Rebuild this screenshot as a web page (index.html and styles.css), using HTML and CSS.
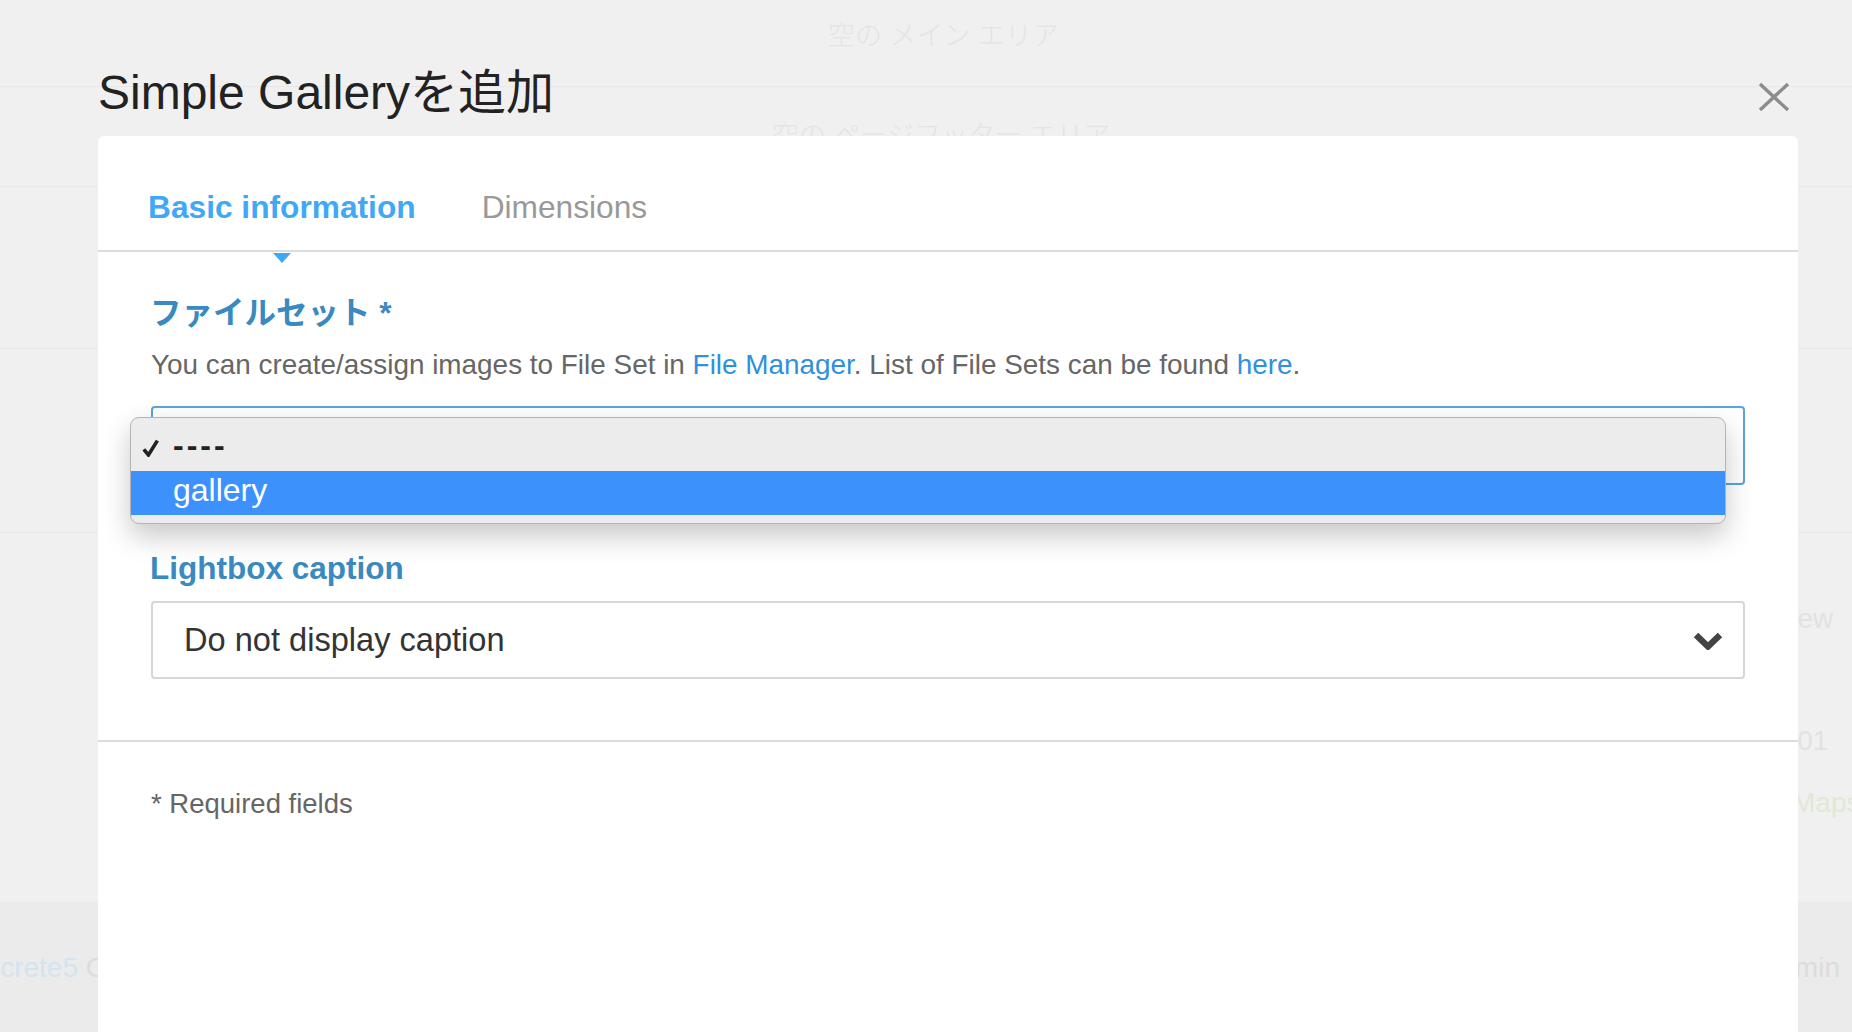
FILE: index.html
```html
<!DOCTYPE html>
<html lang="ja">

<head>
   <meta charset="UTF-8">
   <meta name="viewport" content="width=device-width, initial-scale=1.0">
   <title>Simple Galleryを追加</title>

   <link rel="stylesheet" href="styles.css">
</head>

<body>
   <div class="page">
      <div class="band band__main"><span class="ghost">空の メイン エリア</span></div>
      <div class="band band__footer"><span class="ghost">空の ページフッター エリア</span></div>
      <div class="band band__blank"></div>
      <div class="band band__blank2"></div>
      <div class="band band__list">
         <div class="side">
            <div class="side__item side__view">View</div>
            <div class="side__item side__date">2001</div>
            <div class="side__item side__maps">Maps</div>
         </div>
      </div>
      <div class="band band__bottom">
         <div class="bottom__brand"><span class="brand__name">concrete5</span> CMS</div>
         <div class="bottom__user">Admin</div>
      </div>
   </div>

   <div class="dialog">
      <div class="dialog__head">
         <h1 class="dialog__title">Simple Galleryを追加</h1>
         <div class="dialog__close">
            <svg width="32" height="30" viewBox="0 0 32 30">
               <path d="M2 2 L30 28 M30 2 L2 28" stroke="#8c8c8c" stroke-width="3.4" fill="none" />
            </svg>
         </div>
      </div>

      <div class="dialog__card">
         <div class="tabs">
            <div class="tab tab__active">Basic information</div>
            <div class="tab">Dimensions</div>
         </div>

         <div class="form">
            <div class="field">
               <div class="field__label">ファイルセット *</div>
               <p class="field__help">
                  You can create/assign images to File Set in <a href="#">File Manager</a>. List of File Sets can be found <a href="#">here</a>.
               </p>
               <div class="select__wrap">
                  <div class="select select__focus"></div>

                  <div class="menu">
                     <div class="menu__item menu__checked">
                        <svg class="menu__check" width="17" height="18" viewBox="0 0 17 18">
                           <path d="M1.8 10.4 L6.4 16 L15.4 1.6" stroke="#222" stroke-width="3.6" fill="none" />
                        </svg>
                        <span class="menu__dashes">----</span>
                     </div>
                     <div class="menu__item menu__selected">gallery</div>
                  </div>
               </div>
            </div>

            <div class="field field__caption">
               <div class="field__label">Lightbox caption</div>
               <div class="select">
                  <span class="select__text">Do not display caption</span>
                  <svg class="select__arrow" width="30" height="18" viewBox="0 0 30 18">
                     <path d="M3 3 L15 14.5 L27 3" stroke="#444" stroke-width="6.4" fill="none" />
                  </svg>
               </div>
            </div>
         </div>

         <div class="dialog__foot">* Required fields</div>
      </div>
   </div>
</body>

</html>
```

FILE: styles.css
```css
* {
   font-family: "Liberation Sans", "Noto Sans CJK JP", sans-serif;
   box-sizing: border-box;
   padding: 0;
   margin: 0;
}

body {
   background-color: #f0f0f0;
   height: 1032px;
   overflow: hidden;
   position: relative;
}

/* page behind the dialog */

.band {
   border-bottom: 1px solid #e8e8e8;
}

.ghost {
   font-size: 27px;
   line-height: 1;
   font-weight: 300;
   color: #e4e4e4;
}

.band__main {
   height: 87px;
   padding: 23px 0 0 828px;
}

.band__footer {
   height: 100px;
   padding: 36px 0 0 772px;
}

.band__blank {
   height: 162px;
}

.band__blank2 {
   height: 184px;
}

.band__list {
   height: 369px;
   border-bottom: none;
   display: flex;
   justify-content: flex-end;
}

.side {
   width: 80px;
   padding-top: 72px;
   font-size: 28px;
   line-height: 1;
   color: #e2e2e2;
}

.side__item {
   white-space: nowrap;
}

.side__view {
   padding-left: 1px;
}

.side__date {
   margin-top: 94px;
   margin-left: -6px;
}

.side__maps {
   margin-top: 34px;
   margin-left: 20px;
   color: #e0e8d8;
}

.band__bottom {
   height: 130px;
   background-color: #ebebeb;
   border-bottom: none;
   border-top: 1px solid #e9e9e9;
   display: flex;
   justify-content: space-between;
   align-items: center;
   font-size: 28px;
   color: #dcdcdc;
}

.bottom__brand {
   margin-left: -45px;
}

.brand__name {
   color: #d2e4ef;
}

.bottom__user {
   margin-right: 12px;
}

/* dialog */

.dialog {
   position: absolute;
   top: 0;
   left: 98px;
   width: 1700px;
   height: 1032px;
   display: flex;
   flex-direction: column;
}

.dialog__head {
   height: 136px;
   padding-top: 69px;
   display: flex;
   justify-content: space-between;
   align-items: flex-start;
}

.dialog__title {
   font-size: 48px;
   line-height: 48px;
   font-weight: 400;
   color: #222;
}

.dialog__close {
   margin-top: 13px;
   margin-right: 8px;
   line-height: 0;
}

.dialog__card {
   flex: 1;
   background-color: #fff;
   border-radius: 6px 6px 0 0;
}

.tabs {
   display: flex;
   align-items: flex-end;
   gap: 66px;
   padding: 56px 50px 0;
   border-bottom: 2px solid #dcdcdc;
}

.tab {
   position: relative;
   font-size: 31.7px;
   line-height: 31.5px;
   padding-bottom: 26.5px;
   color: #999;
}

.tab__active {
   color: #3fa9f5;
   font-weight: 700;
}

.tab__active::after {
   content: "";
   position: absolute;
   top: calc(100% + 3px);
   left: 50%;
   transform: translateX(-50%);
   border-top: 10px solid #3fa9f5;
   border-left: 9px solid transparent;
   border-right: 9px solid transparent;
}

.form {
   padding: 46px 53px 61px;
   border-bottom: 2px solid #dcdcdc;
}

.field__label {
   margin-left: -1px;
   font-size: 31.5px;
   line-height: 31.5px;
   font-weight: 700;
   color: #3a89c0;
}

.field__help {
   margin-top: 21px;
   font-size: 27.9px;
   line-height: 27.5px;
   color: #666;
}

.field__help a {
   color: #2f90e0;
   text-decoration: none;
}

.select__wrap {
   position: relative;
   margin-top: 28px;
}

.select {
   height: 79px;
   border: 2px solid #d6d6d6;
   border-radius: 4px;
   display: flex;
   justify-content: space-between;
   align-items: center;
   padding: 0 20px 0 31px;
}

.select__focus {
   border-color: #5aa2e2;
}

.select__text {
   font-size: 32.6px;
   color: #333;
}

.select__arrow {
   margin-top: 2px;
}

.field__caption {
   margin-top: 68px;
}

.field__caption .select {
   margin-top: 16px;
   height: 78px;
}

/* open native-style menu */

.menu {
   position: absolute;
   top: 11px;
   left: -21px;
   width: 1596px;
   padding: 8px 0;
   background-color: #ececec;
   border: 1px solid #b4b4b4;
   border-radius: 9px;
   box-shadow: 0 12px 28px rgba(0, 0, 0, 0.22);
   z-index: 5;
}

.menu__item {
   font-size: 32px;
   line-height: 38px;
   padding-bottom: 6px;
   padding-left: 42px;
   color: #222;
}

.menu__checked {
   display: flex;
   align-items: center;
   padding-left: 11px;
   height: 45px;
   line-height: 39px;
}

.menu__check {
   margin-right: 14px;
   margin-top: 4px;
}

.menu__dashes {
   font-weight: 700;
   letter-spacing: 3px;
}

.menu__selected {
   background-color: #3c91fd;
   color: #fff;
}

.dialog__foot {
   padding: 48px 53px 0;
   font-size: 27.5px;
   line-height: 27.5px;
   color: #666;
}
```
